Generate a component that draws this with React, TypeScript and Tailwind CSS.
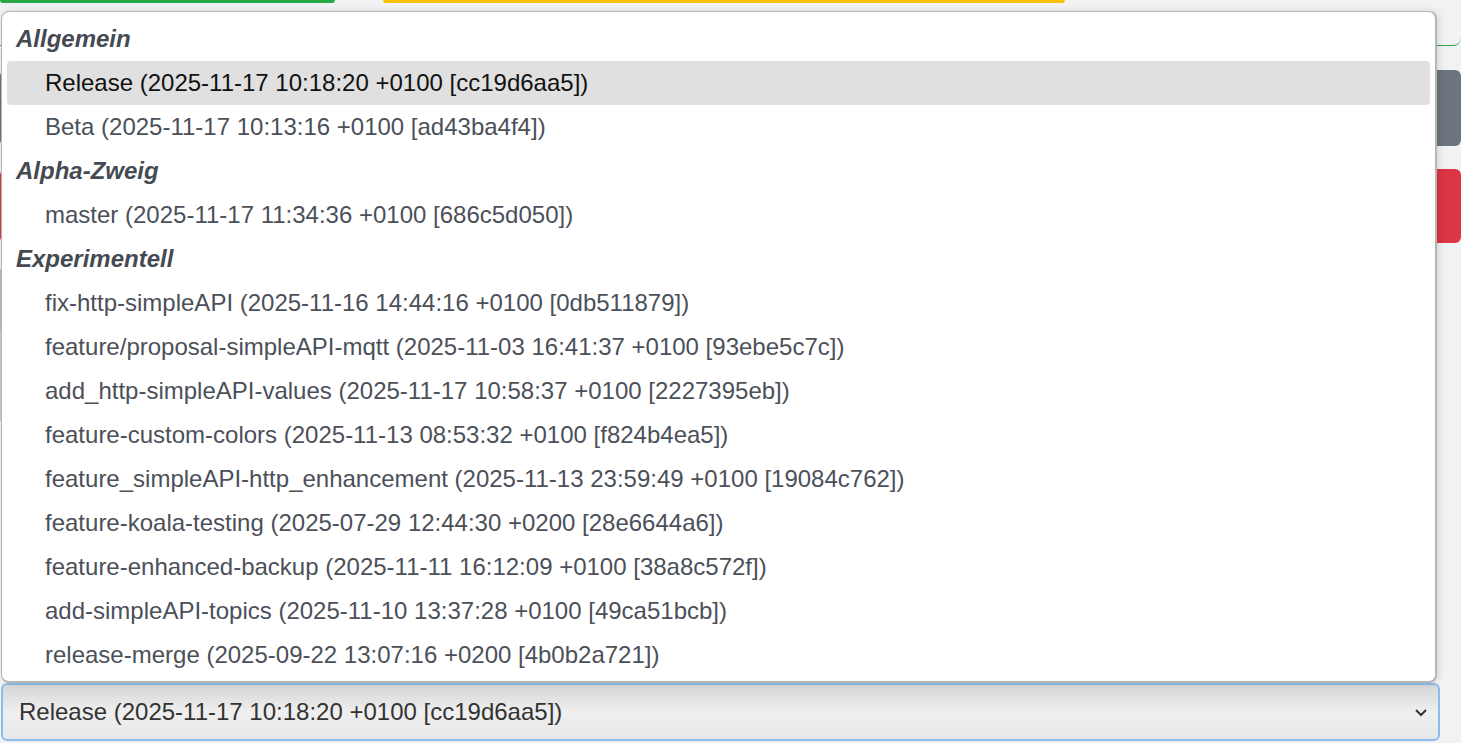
const groups = [
  {
    label: "Allgemein",
    items: [
      "Release (2025-11-17 10:18:20 +0100 [cc19d6aa5])",
      "Beta (2025-11-17 10:13:16 +0100 [ad43ba4f4])",
    ],
  },
  {
    label: "Alpha-Zweig",
    items: ["master (2025-11-17 11:34:36 +0100 [686c5d050])"],
  },
  {
    label: "Experimentell",
    items: [
      "fix-http-simpleAPI (2025-11-16 14:44:16 +0100 [0db511879])",
      "feature/proposal-simpleAPI-mqtt (2025-11-03 16:41:37 +0100 [93ebe5c7c])",
      "add_http-simpleAPI-values (2025-11-17 10:58:37 +0100 [2227395eb])",
      "feature-custom-colors (2025-11-13 08:53:32 +0100 [f824b4ea5])",
      "feature_simpleAPI-http_enhancement (2025-11-13 23:59:49 +0100 [19084c762])",
      "feature-koala-testing (2025-07-29 12:44:30 +0200 [28e6644a6])",
      "feature-enhanced-backup (2025-11-11 16:12:09 +0100 [38a8c572f])",
      "add-simpleAPI-topics (2025-11-10 13:37:28 +0100 [49ca51bcb])",
      "release-merge (2025-09-22 13:07:16 +0200 [4b0b2a721])",
    ],
  },
];

const selected = groups[0].items[0];

export default function App() {
  return (
    <div
      className="relative w-[1461px] h-[743px] overflow-hidden bg-[#f1f2f4]"
      style={{ fontFamily: '"Liberation Sans", Arial, sans-serif' }}
    >
      {/* page behind the open list */}
      <div className="flex flex-col h-full">
        <div className="flex gap-[48px] h-[3px]">
          <div className="w-[335px] h-[3px] bg-[#28a745] rounded-b" />
          <div className="w-[682px] h-[3px] bg-[#ffc107] rounded-b" />
        </div>
        <div className="mt-[4px] h-[39px] border-b border-[#28a745] rounded-br-lg" />
        <div className="mt-[24px] h-[76px] bg-[#6c757d] rounded-md" />
        <div className="mt-[23px] h-[74px] bg-[#dc3545] rounded-md" />
        <div className="mt-[26px] h-[62px] w-[10px] bg-[#c9b3b3]" />
        <div className="h-[90px] w-[10px] bg-[#cfc9b4]" />
        <div className="flex-1" />
        {/* the select itself */}
        <div className="ml-[1px] mb-[2px] mr-[21px] h-[58px] flex items-center justify-between rounded-md border-2 border-[#8cbcec] bg-gradient-to-b from-[#d6d6d6] via-[#efefef] to-[#e8e8e8] pl-[16px] pr-[10px]">
          <span className="text-[24px] text-[#333]">{selected}</span>
          <svg width="14" height="10" viewBox="0 0 14 10" className="mt-[1px]">
            <polyline points="2,2 7,7 12,2" fill="none" stroke="#333" strokeWidth="2" />
          </svg>
        </div>
      </div>

      {/* open option list */}
      <div className="absolute left-[1px] top-[11px] w-[1436px] h-[672px] rounded-lg border-2 border-[#b5b5b5] border-l-[1px] border-t-[1px] bg-white px-[5px] pt-[5px] shadow-[2px_0_6px_rgba(0,0,0,0.12)]">
        {groups.map((g) => (
          <div key={g.label}>
            <div className="h-[44px] flex items-center pl-[9px] text-[24px] font-bold italic text-[#454a52]">
              {g.label}
            </div>
            {g.items.map((it) => (
              <div
                key={it}
                className={
                  it === selected
                    ? "h-[44px] flex items-center pl-[38px] text-[24px] rounded bg-[#e0e0e0] text-[#111]"
                    : "h-[44px] flex items-center pl-[38px] text-[24px] text-[#4b5059]"
                }
              >
                {it}
              </div>
            ))}
          </div>
        ))}
      </div>
    </div>
  );
}
